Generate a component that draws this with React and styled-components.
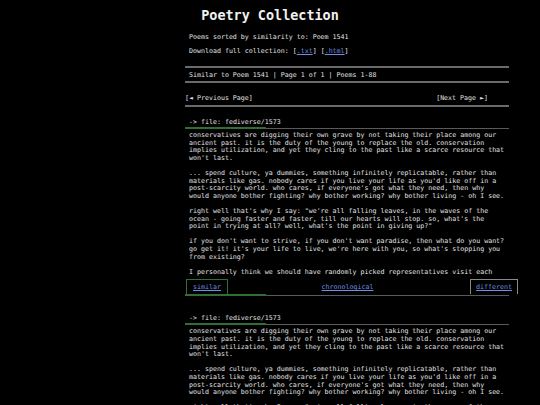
import styled, { createGlobalStyle } from "styled-components";

const GlobalStyle = createGlobalStyle`
  html, body {
    margin: 0;
    padding: 0;
    background: #000;
  }
  body {
    color: #e2e2e2;
    font-family: "DejaVu Sans Mono", "Liberation Mono", monospace;
    font-size: 6.64px;
  }
`;

const Header = styled.header`
  padding-top: 8px;
  text-align: center;
`;

const Title = styled.h1`
  margin: 0;
  font-size: 13.45px;
  line-height: 16px;
  font-weight: bold;
  color: #f2f2f2;
`;

const Column = styled.main`
  margin-left: 185px;
  width: 324px;
`;

const Intro = styled.p`
  margin: ${({ $top }) => $top}px 0 0;
  padding-left: 4px;
  line-height: 8px;
`;

const Link = styled.a`
  color: #6f8fe0;
  text-decoration: underline;
`;

const StatusBar = styled.div`
  margin-top: 11px;
  border-top: 2px solid #6a6a6a;
  border-bottom: 2px solid #6a6a6a;
  padding: 3px 4px 2px;
  line-height: 8px;
`;

const Pager = styled.nav`
  display: flex;
  justify-content: space-between;
  margin-top: 11px;
  padding-right: 21px;
  padding-bottom: 3px;
  line-height: 8px;
  color: #e2e2e2;
  border-bottom: 2px solid #6a6a6a;
`;

const Card = styled.article`
  margin-top: ${({ $top }) => $top}px;
`;

const FileName = styled.div`
  padding-left: 4px;
  line-height: 8px;
`;

const ScoreLine = styled.div`
  display: flex;
  align-items: flex-end;
  height: 2px;
  margin-top: ${({ $top }) => $top}px;

  &::before {
    content: "";
    width: ${({ $score }) => $score}%;
    height: 2px;
    background: #2f6f33;
  }
  &::after {
    content: "";
    flex: 1;
    height: 1px;
    background: #5a5a5a;
  }
`;

const Body = styled.div`
  margin-top: 3px;
  padding-left: 4px;
  max-height: calc(7.6px * 19);
  overflow: hidden;
`;

const Para = styled.p`
  margin: 0 0 7.6px;
  line-height: 7.6px;
  white-space: pre;
`;

const Actions = styled.div`
  display: grid;
  grid-template-columns: 1fr auto 1fr;
  align-items: stretch;
  height: 15px;
  margin-top: 3px;
`;

const Action = styled.a`
  justify-self: ${({ $align }) => $align};
  display: flex;
  align-items: center;
  padding: 0 ${({ $pad }) => $pad}px;
  margin: 0 ${({ $shift }) => $shift}px 0 1px;
  border: 1px solid ${({ $border }) => $border};
  border-bottom: none;
  color: #6f8fe0;
  text-decoration: underline;
`;

const poem = [
  "conservatives are digging their own grave by not taking their place among our\nancient past. it is the duty of the young to replace the old. conservation\nimplies utilization, and yet they cling to the past like a scarce resource that\nwon't last.",
  "... spend culture, ya dummies, something infinitely replicatable, rather than\nmaterials like gas. nobody cares if you live your life as you'd like off in a\npost-scarcity world. who cares, if everyone's got what they need, then why\nwould anyone bother fighting? why bother working? why bother living - oh I see.",
  "right well that's why I say: \"we're all falling leaves, in the waves of the\nocean - going faster and faster, till our hearts will stop. so, what's the\npoint in trying at all? well, what's the point in giving up?\"",
  "if you don't want to strive, if you don't want paradise, then what do you want?\ngo get it! it's your life to live, we're here with you, so what's stopping you\nfrom existing?",
  "I personally think we should have randomly picked representatives visit each\nother's homes, once a year, and just talk. no cameras, no speeches.",
];

const cards = [
  { file: "fediverse/1573", score: 25, top: 11 },
  { file: "fediverse/1573", score: 25, top: 18 },
];

const PoemCard = ({ file, score, top }) => (
  <Card $top={top}>
    <FileName>-&gt; file: {file}</FileName>
    <ScoreLine $top={1} $score={score} />
    <Body>
      {poem.map((text, i) => (
        <Para key={i}>{text}</Para>
      ))}
    </Body>
    <Actions>
      <Action href="#" $align="start" $pad={6} $shift={0} $border="#2f6f33">
        similar
      </Action>
      <Action href="#" $align="center" $pad={0} $shift={0} $border="transparent">
        chronological
      </Action>
      <Action href="#" $align="end" $pad={5} $shift={-9} $border="#8a8a8a">
        different
      </Action>
    </Actions>
    <ScoreLine $top={0} $score={score} />
  </Card>
);

const App = () => (
  <>
    <GlobalStyle />
    <Header>
      <Title>Poetry Collection</Title>
    </Header>
    <Column>
      <Intro $top={9}>Poems sorted by similarity to: Poem 1541</Intro>
      <Intro $top={6}>
        Download full collection: [<Link href="#">.txt</Link>] [
        <Link href="#">.html</Link>]
      </Intro>
      <StatusBar>Similar to Poem 1541 | Page 1 of 1 | Poems 1-88</StatusBar>
      <Pager>
        <span>[◄ Previous Page]</span>
        <span>[Next Page ►]</span>
      </Pager>
      {cards.map((c, i) => (
        <PoemCard key={i} {...c} />
      ))}
    </Column>
  </>
);

export default App;
